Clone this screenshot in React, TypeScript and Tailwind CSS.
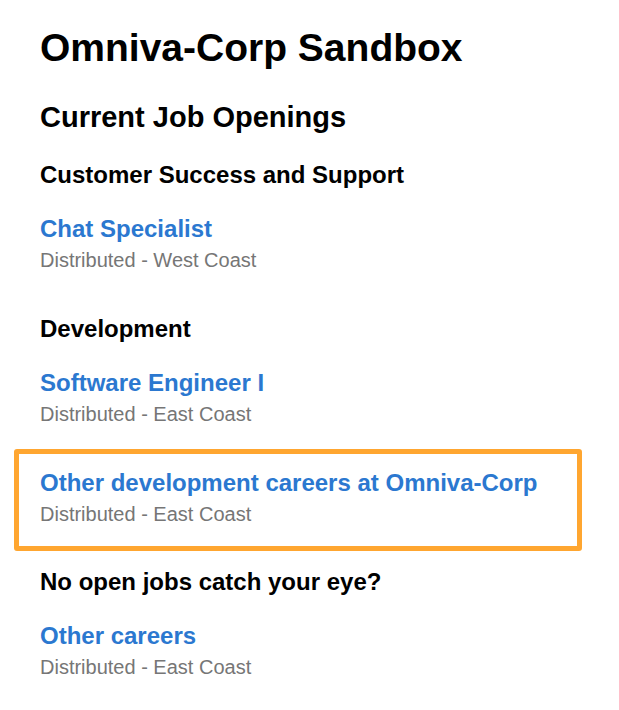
import React from "react";

const Job = ({ title, loc }: { title: string; loc: string }) => (
  <div className="flex flex-col">
    <a href="#" className="text-[24px] leading-[28px] font-bold text-[#2b78d0]">{title}</a>
    <span className="mt-[5px] text-[20px] leading-[24px] text-[#767676]">{loc}</span>
  </div>
);

export default function App() {
  return (
    <div className="min-h-[710px] w-[619px] bg-white text-black" style={{ fontFamily: '"Liberation Sans", Arial, sans-serif' }}>
      <div className="flex flex-col pt-[25px]">
        <h1 className="px-[40px] text-[39px] leading-[46px] font-bold">Omniva-Corp Sandbox</h1>
        <h2 className="mt-[29px] px-[40px] text-[29px] leading-[34px] font-bold">Current Job Openings</h2>
        <h3 className="mt-[27px] px-[40px] text-[24px] leading-[28px] font-bold">Customer Success and Support</h3>
        <div className="mt-[26px] px-[40px]">
          <Job title="Chat Specialist" loc="Distributed - West Coast" />
        </div>
        <h3 className="mt-[43px] px-[40px] text-[24px] leading-[28px] font-bold">Development</h3>
        <div className="mt-[26px] px-[40px]">
          <Job title="Software Engineer I" loc="Distributed - East Coast" />
        </div>
        <div className="mt-[23px] ml-[14px] w-[568px] rounded-[3px] border-[5px] border-[#ffa630] px-[21px] pt-[15px] pb-[20px]">
          <Job title="Other development careers at Omniva-Corp" loc="Distributed - East Coast" />
        </div>
        <h3 className="mt-[17px] px-[40px] text-[24px] leading-[28px] font-bold">No open jobs catch your eye?</h3>
        <div className="mt-[26px] px-[40px]">
          <Job title="Other careers" loc="Distributed - East Coast" />
        </div>
      </div>
    </div>
  );
}
